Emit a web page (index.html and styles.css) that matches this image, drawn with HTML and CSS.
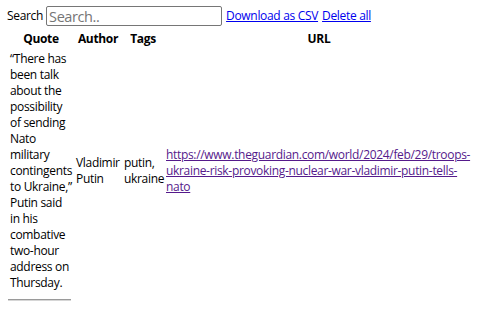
FILE: index.html
```html
<!DOCTYPE html>
<html>
<head>
<meta charset="utf-8">
<link rel="stylesheet" href="styles.css">
</head>
<body>
<div class="page">
  <div class="toolbar">
    <label class="search-label" for="q">Search</label>
    <input id="q" class="search-input" type="text" placeholder="Search..">
    <a class="link" href="#">Download as CSV</a>
    <a class="link" href="#">Delete all</a>
  </div>
  <table class="quotes">
    <thead>
      <tr>
        <th class="col-quote">Quote</th>
        <th class="col-author">Author</th>
        <th class="col-tags">Tags</th>
        <th class="col-url">URL</th>
      </tr>
    </thead>
    <tbody>
      <tr>
        <td>“There has been talk about the possibility of sending Nato military contingents to Ukraine,” Putin said in his combative two-hour address on Thursday.</td>
        <td>Vladimir Putin</td>
        <td>putin, ukraine</td>
        <td><a class="link visited" href="#">https://www.theguardian.com/world/2024/feb/29/troops-ukraine-risk-provoking-nuclear-war-vladimir-putin-tells-nato</a></td>
      </tr>
    </tbody>
  </table>
  <hr class="rule">
</div>
</body>
</html>
```

FILE: styles.css
```css
html, body {
  margin: 0;
  padding: 0;
  background: #fff;
}

body {
  font-family: "Open Sans", "Noto Sans", sans-serif;
  font-size: 12px;
  line-height: 16px;
  letter-spacing: -0.32px;
  color: #000;
}

.page {
  padding: 6px 7px 0 7px;
}

.toolbar {
  display: flex;
  align-items: center;
  height: 20px;
  margin-bottom: 2px;
  white-space: nowrap;
}

.search-label {
  margin-right: 3px;
}

.search-input {
  box-sizing: border-box;
  width: 176px;
  height: 20px;
  margin: 0 4px 0 0;
  padding: 0 2px;
  border: 1px solid #767676;
  border-radius: 2px;
  font-family: "Open Sans", "Noto Sans", sans-serif;
  font-size: 14.5px;
  letter-spacing: -0.4px;
  color: #000;
  outline: none;
}

.search-input::placeholder {
  color: #757575;
}

.link {
  color: #0000ee;
  text-decoration: underline;
  margin-right: 4px;
}

.link.visited {
  color: #551a8b;
  margin-right: 0;
}

.quotes {
  table-layout: fixed;
  width: 468px;
  border-spacing: 2px;
  border-collapse: separate;
}

.quotes th,
.quotes td {
  box-sizing: border-box;
  padding: 1px;
  vertical-align: middle;
}

.quotes th {
  font-weight: bold;
  text-align: center;
}

.quotes td {
  text-align: left;
}

.col-quote { width: 64px; }
.col-author { width: 46px; }
.col-tags { width: 40px; }

.rule {
  width: 63px;
  margin: 5px 0 0 1px;
  border: 0;
  border-top: 1px solid #9a9a9a;
  border-bottom: 1px solid #d6d6d6;
  height: 0;
}
```
